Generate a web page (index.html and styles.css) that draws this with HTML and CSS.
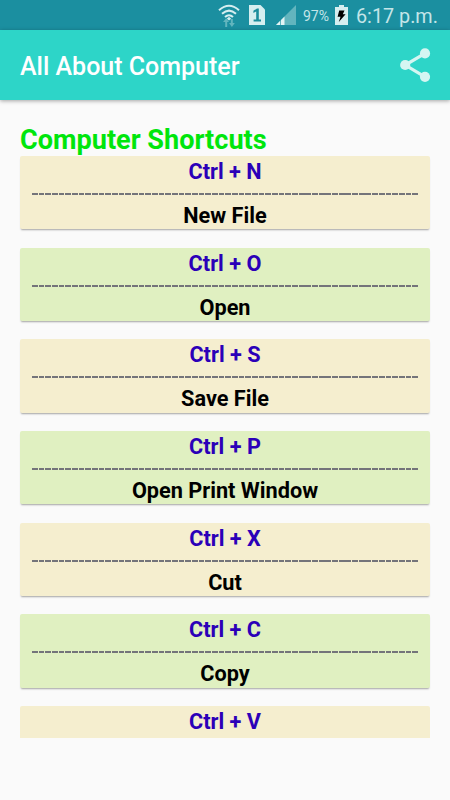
FILE: index.html
```html
<!DOCTYPE html>
<html lang="en">
<head>
  <meta charset="UTF-8">
  <meta name="viewport" content="width=device-width, initial-scale=1.0">
  <title>All About Computer</title>
  <link rel="stylesheet" href="styles.css">
</head>
<body>
  <div class="status">
    <svg class="wifi" width="22" height="24" viewBox="0 0 22 24">
      <g fill="none" stroke="#d6eef0" stroke-width="2">
        <path d="M1 7.2Q11 -1.8 21 7.2"/>
        <path d="M4 10.8Q11 4.4 18 10.8"/>
        <path d="M7 14Q11 10.4 15 14"/>
      </g>
      <path d="M8.8 15.8L11 13.8L13.2 15.8L11 17.6z" fill="#d6eef0"/>
      <path d="M5 19L8.2 15.2L11 19H9.2V24H7.2V19zM11 20H12.8V16H14.8V20H16.8L13.9 24z" fill="#62b5be"/>
    </svg>
    <svg class="sim" width="16" height="20" viewBox="0 0 16 20">
      <path d="M0 0H11.5L16 4.5V20H0z" fill="#d6eef0"/>
      <path d="M4.4 5.8L8 3.4H9.8V14.5H12V16.5H4.6V14.5H7.2V6.4L4.4 7.9z" fill="#1b8c9c"/>
    </svg>
    <svg class="signal" width="20" height="20" viewBox="0 0 20 20">
      <path d="M0 20L20 0V20z" fill="#62b5be"/>
      <path d="M0 20L4 16V20zM5 20V15L8.5 11.5V20z" fill="#e2f3f4"/>
    </svg>
    <span class="percent">97%</span>
    <svg class="battery" width="13" height="20" viewBox="0 0 13 20">
      <path d="M4 0H9V2H13V20H0V2H4z" fill="#d6eef0"/>
      <path d="M4.2 5.5H9.5L7.8 9.2H10.6L3.8 17L5.5 11.7H2.6z" fill="#000"/>
    </svg>
    <span class="clock">6:17 p.m.</span>
  </div>

  <div class="toolbar">
    <h1>All About Computer</h1>
    <svg class="share" width="32" height="34" viewBox="0 0 32 34">
      <path d="M26 5.3L6.2 17L26 28.8" fill="none" stroke="#d5f6f2" stroke-width="3.2"/>
      <g fill="#d5f6f2">
        <circle cx="26" cy="5.4" r="5.1"/>
        <circle cx="6.2" cy="17" r="5.1"/>
        <circle cx="26" cy="28.8" r="5.1"/>
      </g>
    </svg>
  </div>

  <div class="content">
    <h2>Computer Shortcuts</h2>
    <div class="list">
      <div class="card">
        <p class="keys">Ctrl + N</p>
        <div class="dashes"></div>
        <p class="action">New File</p>
      </div>
      <div class="card green">
        <p class="keys">Ctrl + O</p>
        <div class="dashes"></div>
        <p class="action">Open</p>
      </div>
      <div class="card">
        <p class="keys">Ctrl + S</p>
        <div class="dashes"></div>
        <p class="action">Save File</p>
      </div>
      <div class="card green">
        <p class="keys">Ctrl + P</p>
        <div class="dashes"></div>
        <p class="action">Open Print Window</p>
      </div>
      <div class="card">
        <p class="keys">Ctrl + X</p>
        <div class="dashes"></div>
        <p class="action">Cut</p>
      </div>
      <div class="card green">
        <p class="keys">Ctrl + C</p>
        <div class="dashes"></div>
        <p class="action">Copy</p>
      </div>
      <div class="card last">
        <p class="keys">Ctrl + V</p>
      </div>
    </div>
  </div>
</body>
</html>
```

FILE: styles.css
```css
* {
  margin: 0;
  padding: 0;
  box-sizing: border-box;
}

body {
  height: 800px;
  background-color: #fafafa;
  font-family: Roboto, sans-serif;
  overflow: hidden;
}

.status {
  display: flex;
  height: 30px;
  padding: 5px 0 0 218px;
  background-color: #1b8fa0;
  color: #c4e5e8;
  white-space: nowrap;
}

.status svg {
  flex: none;
}

.wifi {
  margin-top: -2px;
}

.sim {
  margin-left: 9px;
}

.signal {
  margin-left: 11px;
}

.percent {
  width: 28px;
  margin-left: 7px;
  font-size: 14px;
  line-height: 23px;
}

.battery {
  margin-left: 4px;
}

.clock {
  margin-left: 8px;
  font-size: 19.8px;
  line-height: 23px;
}

.toolbar {
  display: flex;
  justify-content: space-between;
  align-items: center;
  height: 70px;
  padding: 0 19px 0 20px;
  background-color: #2dd5c8;
  box-shadow: 0 1px 4px rgba(0, 0, 0, 0.35);
}

.toolbar h1 {
  padding-top: 3px;
  color: #fff;
  font-size: 25px;
  font-weight: 500;
  line-height: 30px;
}

.content {
  padding: 24px 20px 0;
}

.content h2 {
  height: 32px;
  color: #00e60c;
  font-size: 27.1px;
  font-weight: 700;
  line-height: 32px;
}

.list {
  height: 582px;
  margin: 0 -4px;
  padding: 0 4px;
  overflow: hidden;
}

.card {
  height: 73.2px;
  margin-bottom: 18.5px;
  padding: 0 12px;
  border-radius: 2px;
  background-color: #f5eecf;
  box-shadow: 0 2px 2px -1px rgba(0, 0, 0, 0.35);
  font-size: 21.7px;
  font-weight: 700;
  line-height: 32px;
  text-align: center;
}

.green {
  background-color: #e0f0c1;
}

.last {
  margin-bottom: 0;
  box-shadow: none;
}

.keys {
  color: #2b00b8;
}

.dashes {
  height: 2px;
  margin: 5px 0;
  background: repeating-linear-gradient(to right, #74747a 0, #74747a 5.7px, transparent 5.7px, transparent 6.67px);
}

.action {
  color: #000;
}
```
